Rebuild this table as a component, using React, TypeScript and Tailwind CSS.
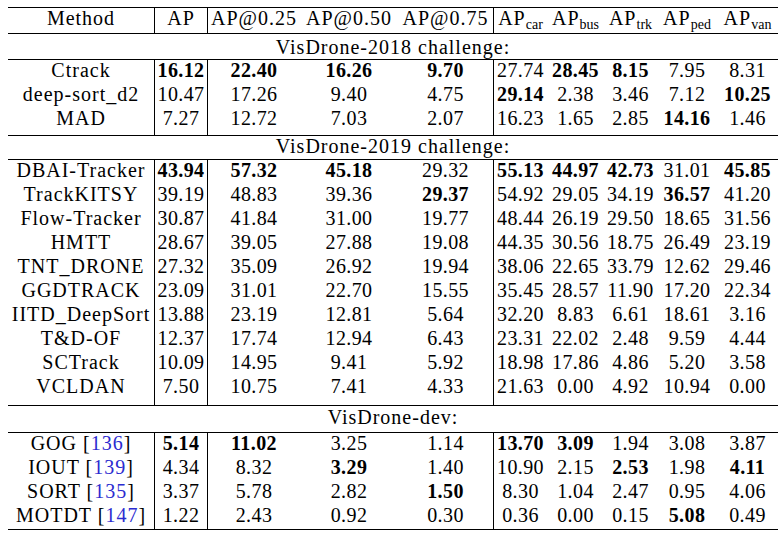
import React from "react";

type Cell = { v: string; b?: boolean };
type Row = { name: React.ReactNode; cells: Cell[] };

const p = (s: string): Cell[] =>
  s.split(" ").map((t) => (t.startsWith("*") ? { v: t.slice(1), b: true } : { v: t }));

const Ref = ({ n, label }: { n: string; label: string }) => (
  <span>
    {label} [<span className="text-[#2b2bd0]">{n}</span>]
  </span>
);

const g1: Row[] = [
  { name: "Ctrack", cells: p("*16.12 *22.40 *16.26 *9.70 27.74 *28.45 *8.15 7.95 8.31") },
  { name: "deep-sort_d2", cells: p("10.47 17.26 9.40 4.75 *29.14 2.38 3.46 7.12 *10.25") },
  { name: "MAD", cells: p("7.27 12.72 7.03 2.07 16.23 1.65 2.85 *14.16 1.46") },
];

const g2: Row[] = [
  { name: "DBAI-Tracker", cells: p("*43.94 *57.32 *45.18 29.32 *55.13 *44.97 *42.73 31.01 *45.85") },
  { name: "TrackKITSY", cells: p("39.19 48.83 39.36 *29.37 54.92 29.05 34.19 *36.57 41.20") },
  { name: "Flow-Tracker", cells: p("30.87 41.84 31.00 19.77 48.44 26.19 29.50 18.65 31.56") },
  { name: "HMTT", cells: p("28.67 39.05 27.88 19.08 44.35 30.56 18.75 26.49 23.19") },
  { name: "TNT_DRONE", cells: p("27.32 35.09 26.92 19.94 38.06 22.65 33.79 12.62 29.46") },
  { name: "GGDTRACK", cells: p("23.09 31.01 22.70 15.55 35.45 28.57 11.90 17.20 22.34") },
  { name: "IITD_DeepSort", cells: p("13.88 23.19 12.81 5.64 32.20 8.83 6.61 18.61 3.16") },
  { name: "T&D-OF", cells: p("12.37 17.74 12.94 6.43 23.31 22.02 2.48 9.59 4.44") },
  { name: "SCTrack", cells: p("10.09 14.95 9.41 5.92 18.98 17.86 4.86 5.20 3.58") },
  { name: "VCLDAN", cells: p("7.50 10.75 7.41 4.33 21.63 0.00 4.92 10.94 0.00") },
];

const g3: Row[] = [
  { name: <Ref label="GOG" n="136" />, cells: p("*5.14 *11.02 3.25 1.14 *13.70 *3.09 1.94 3.08 3.87") },
  { name: <Ref label="IOUT" n="139" />, cells: p("4.34 8.32 *3.29 1.40 10.90 2.15 *2.53 1.98 *4.11") },
  { name: <Ref label="SORT" n="135" />, cells: p("3.37 5.78 2.82 *1.50 8.30 1.04 2.47 0.95 4.06") },
  { name: <Ref label="MOTDT" n="147" />, cells: p("1.22 2.43 0.92 0.30 0.36 0.00 0.15 *5.08 0.49") },
];

const GRID = "grid grid-cols-[147px_53px_92px_98px_96px_53px_57px_53px_60px_61px]";

function cellBorder(i: number) {
  if (i === 0 || i === 1 || i === 4) return "border-r border-black";
  return "";
}

function DataRow({ row, h, last }: { row: Row; h: string; last?: boolean }) {
  return (
    <div className={`${GRID} ${h} ${last ? "border-b border-black" : ""}`}>
      <div className={`${cellBorder(0)} text-center tracking-[1px] whitespace-nowrap leading-[20px]`}>{row.name}</div>
      {row.cells.map((c, i) => (
        <div
          key={i}
          className={`${cellBorder(i + 1)} text-center leading-[20px] tracking-[0.4px] whitespace-nowrap ${c.b ? "font-bold" : ""}`}
        >
          {c.v}
        </div>
      ))}
    </div>
  );
}

function Group({ rows, lastH }: { rows: Row[]; lastH: string }) {
  return (
    <>
      {rows.map((r, i) => (
        <DataRow key={i} row={r} h={i === rows.length - 1 ? lastH : "h-[24px]"} last={i === rows.length - 1} />
      ))}
    </>
  );
}

function Section({ label, h, pt }: { label: string; h: string; pt: string }) {
  return (
    <div className={`${h} ${pt} border-b border-black text-center tracking-[1px] leading-[20px]`}>{label}</div>
  );
}

const Sub = ({ base, sub }: { base: string; sub: string }) => (
  <span className="whitespace-nowrap">
    <span className="tracking-[1px]">{base}</span>
    <span className="text-[14px] relative top-[4px]">{sub}</span>
  </span>
);

export default function App() {
  return (
    <div
      className="w-[782px] h-[538px] bg-white text-black pt-[7px] pl-[8px] text-[20px] font-serif"
      style={{ fontFamily: '"Liberation Serif", serif' }}
    >
      <div className="w-[770px] border-t border-black">
        <div className={`${GRID} h-[26px] border-b border-black`}>
          <div className="border-r border-black text-center tracking-[1px] leading-[20px]">Method</div>
          <div className="border-r border-black text-center tracking-[1px] leading-[20px]">AP</div>
          <div className="text-center tracking-[1px] leading-[20px] whitespace-nowrap">AP@0.25</div>
          <div className="text-center tracking-[1px] leading-[20px] whitespace-nowrap">AP@0.50</div>
          <div className="border-r border-black text-center tracking-[1px] leading-[20px] whitespace-nowrap">AP@0.75</div>
          <div className="text-center leading-[20px]"><Sub base="AP" sub="car" /></div>
          <div className="text-center leading-[20px]"><Sub base="AP" sub="bus" /></div>
          <div className="text-center leading-[20px]"><Sub base="AP" sub="trk" /></div>
          <div className="text-center leading-[20px]"><Sub base="AP" sub="ped" /></div>
          <div className="text-center leading-[20px]"><Sub base="AP" sub="van" /></div>
        </div>
        <Section label="VisDrone-2018 challenge:" h="h-[26px]" pt="pt-[3px]" />
        <Group rows={g1} lastH="h-[28px]" />
        <Section label="VisDrone-2019 challenge:" h="h-[24px]" pt="pt-0" />
        <Group rows={g2} lastH="h-[30px]" />
        <Section label="VisDrone-dev:" h="h-[27px]" pt="pt-[1px]" />
        <Group rows={g3} lastH="h-[25px]" />
      </div>
    </div>
  );
}
